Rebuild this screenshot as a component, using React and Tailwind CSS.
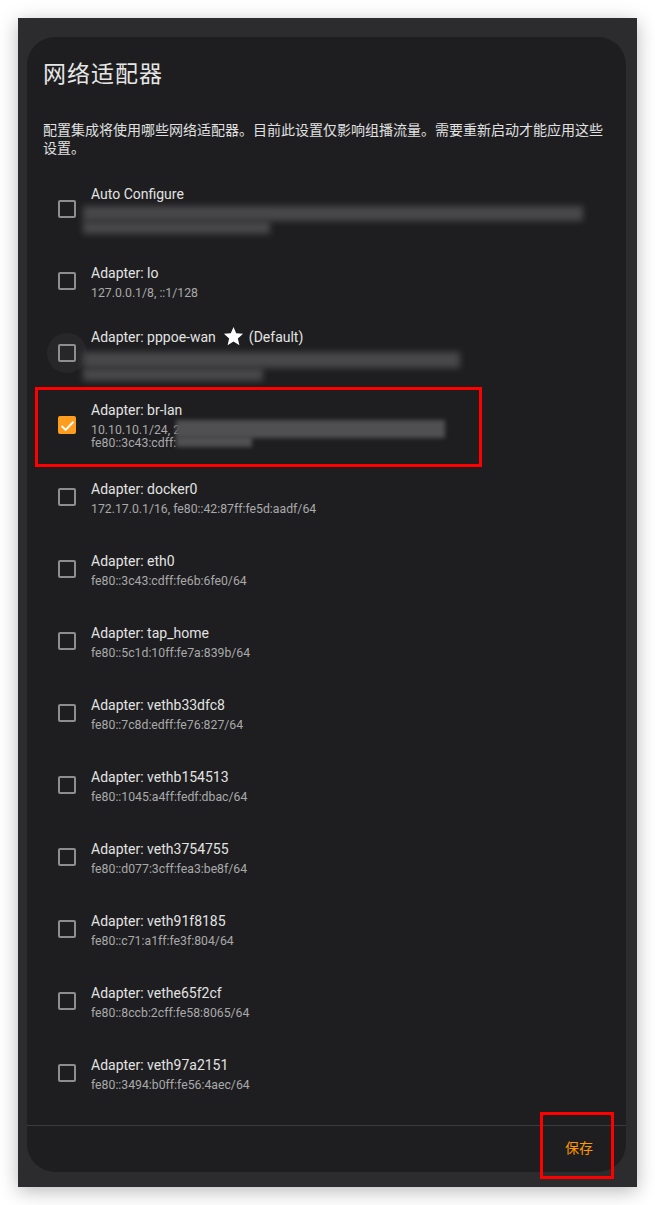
import React from "react";

const STAR =
  "M12,17.27L18.18,21L16.54,13.97L22,9.24L14.81,8.62L12,2L9.19,8.62L2,9.24L7.45,13.97L5.82,21L12,17.27Z";

function Checkbox({ checked, ripple }) {
  return (
    <div
      className={
        "w-10 h-10 shrink-0 rounded-full flex items-center justify-center " +
        (ripple ? "bg-[#27272a]" : "")
      }
    >
      {checked ? (
        <div className="w-[18px] h-[18px] rounded-[2px] bg-[#ff9d1f] flex items-center justify-center">
          <svg viewBox="0 0 24 24" className="w-[15px] h-[15px]">
            <path
              d="M2.5 12.5 L9 19 L21.5 6"
              fill="none"
              stroke="#ffffff"
              strokeWidth="3"
            />
          </svg>
        </div>
      ) : (
        <div className="w-[18px] h-[18px] rounded-[2px] border-2 border-[#8e8e90]" />
      )}
    </div>
  );
}

function Row({ title, sub, checked, ripple, children, star, overlay }) {
  return (
    <div className="relative h-[72px] flex items-center pl-5 shrink-0">
      <Checkbox checked={checked} ripple={ripple} />
      <div className="ml-1 flex flex-col">
        {star ? (
          <div className="flex items-center h-[22px] text-[14px] leading-5 text-[#e3e3e3]">
            <span>{title}</span>
            <svg viewBox="0 0 24 24" className="w-[23px] h-[23px] ml-[6px] mr-1">
              <path d={STAR} fill="#ffffff" />
            </svg>
            <span>(Default)</span>
          </div>
        ) : (
          <div className="text-[14px] leading-5 text-[#e3e3e3]">{title}</div>
        )}
        <div className="mt-1 text-[12.25px] leading-[13px] text-[#a9a9ab]">
          {sub ? <div>{sub}</div> : children}
        </div>
      </div>
      {overlay}
    </div>
  );
}

const rows = [
  ["Adapter: docker0", "172.17.0.1/16, fe80::42:87ff:fe5d:aadf/64"],
  ["Adapter: eth0", "fe80::3c43:cdff:fe6b:6fe0/64"],
  ["Adapter: tap_home", "fe80::5c1d:10ff:fe7a:839b/64"],
  ["Adapter: vethb33dfc8", "fe80::7c8d:edff:fe76:827/64"],
  ["Adapter: vethb154513", "fe80::1045:a4ff:fedf:dbac/64"],
  ["Adapter: veth3754755", "fe80::d077:3cff:fea3:be8f/64"],
  ["Adapter: veth91f8185", "fe80::c71:a1ff:fe3f:804/64"],
  ["Adapter: vethe65f2cf", "fe80::8ccb:2cff:fe58:8065/64"],
  ["Adapter: veth97a2151", "fe80::3494:b0ff:fe56:4aec/64"],
];

export default function App() {
  return (
    <div className="w-[655px] h-[1205px] bg-white pt-[18px] pl-[18px] font-['Roboto','Noto_Sans_CJK_SC',sans-serif] overflow-hidden">
      <div className="w-[619px] h-[1169px] bg-[#2c2c2e] shadow-[0_4px_18px_rgba(0,0,0,0.28)] pt-[19px] pl-[9px]">
        <div className="w-[599px] h-[1135px] rounded-[28px] bg-[#1e1e20] flex flex-col">
          <div className="pt-[19px] px-4 text-[23px] leading-[32px] tracking-[1px] text-[#e6e6e6] font-['Noto_Sans_CJK_SC',sans-serif]">
            网络适配器
          </div>
          <div className="mt-[32px] px-4 text-[14px] leading-[18px] text-[#e0e0e0] font-['Noto_Sans_CJK_SC',sans-serif]">
            配置集成将使用哪些网络适配器。目前此设置仅影响组播流量。需要重新启动才能应用这些设置。
          </div>
          <div className="mt-[17px] flex-1 flex flex-col overflow-hidden">
            <Row title="Auto Configure">
              <div className="-ml-2 -mt-[2px] w-[500px] h-[15px] bg-[#48484a] blur-[3px]" />
              <div className="-ml-2 w-[187px] h-[13px] bg-[#48484a] blur-[3px]" />
            </Row>
            <Row title="Adapter: lo" sub="127.0.0.1/8, ::1/128" />
            <Row title="Adapter: pppoe-wan" star ripple>
              <div className="-ml-2 w-[377px] h-[16px] bg-[#48484a] blur-[3px]" />
              <div className="-ml-2 w-[180px] h-[13px] bg-[#48484a] blur-[3px]" />
            </Row>
            <Row
              title="Adapter: br-lan"
              checked
              overlay={
                <div className="absolute left-2 top-[-2px] w-[447px] h-[80px] border-[3px] border-[#ff0000]" />
              }
            >
              <div className="relative">
                <div>10.10.10.1/24, 2</div>
                <div>fe80::3c43:cdff:</div>
                <div className="absolute left-[85px] top-[-4px] w-[269px] h-[18px] bg-[#505052] blur-[2px]" />
                <div className="absolute left-[85px] top-[12px] w-[76px] h-[11px] bg-[#505052] blur-[2px]" />
              </div>
            </Row>
            {rows.map(([t, s]) => (
              <Row key={t} title={t} sub={s} />
            ))}
          </div>
          <div className="border-t border-[#3c3c3e] h-[47px] flex items-start pt-[3px] justify-end pr-[25px]">
            <div className="relative">
              <div className="px-2 h-9 flex items-center text-[14px] text-[#ff9800] font-['Noto_Sans_CJK_SC',sans-serif]">
                保存
              </div>
              <div className="absolute left-[-17px] right-[-13px] top-[-17px] bottom-[-14px] border-[3px] border-[#ff0000]" />
            </div>
          </div>
        </div>
      </div>
    </div>
  );
}
